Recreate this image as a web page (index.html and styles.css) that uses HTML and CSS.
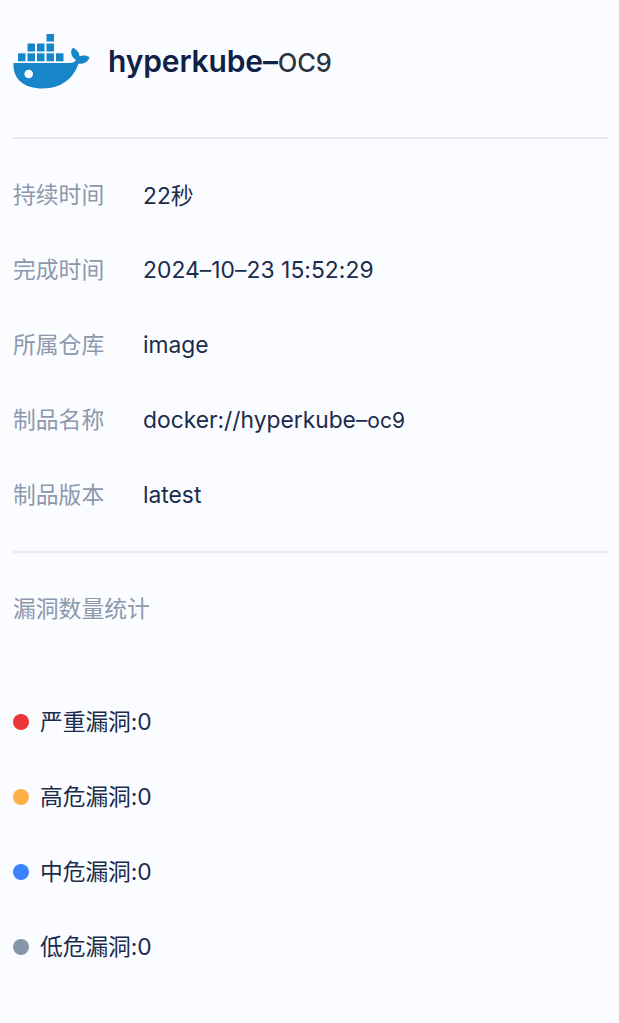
FILE: index.html
```
<!DOCTYPE html>
<html lang="zh-CN">

<head>
    <meta charset="UTF-8">
    <meta name="viewport" content="width=device-width, initial-scale=1.0">
    <title>hyperkube</title>
    <link rel="stylesheet" href="styles.css">
</head>

<body>
    <div class="panel">
        <div class="header">
            <svg class="logo" width="78" height="58" viewBox="0 0 78 58" fill="#1786c8">
                <rect x="33.5" y="1" width="7.5" height="7.5" />
                <rect x="14.5" y="10.5" width="7.5" height="8" />
                <rect x="24" y="10.5" width="7.5" height="8" />
                <rect x="33.5" y="10.5" width="7.5" height="8" />
                <rect x="5" y="20.3" width="7.5" height="8" />
                <rect x="14.5" y="20.3" width="7.5" height="8" />
                <rect x="24" y="20.3" width="7.5" height="8" />
                <rect x="33.5" y="20.3" width="7.5" height="8" />
                <rect x="43" y="20.3" width="7.5" height="8" />
                <path d="M.5 30H56C60 30 62 29 63 27C58.500 24 57 20 59 15.500L60.500 15C64.500 17 66.500 20 66.500 23.300C70 22 74 22.500 76.500 24.500C75 29 71 31 65.500 30.800C60 46 48 55.500 30 55.500C10 55.500-.5 45 .5 30Z" />
                <circle cx="15.700" cy="41" r="4.300" fill="#fafcff" />
            </svg>
            <h1 class="title">hyperkube–<span class="suffix">OC9</span></h1>
        </div>

        <div class="info">
            <div class="row"><span class="label">持续时间</span><span>22秒</span></div>
            <div class="row"><span class="label">完成时间</span><span class="date">2024–10–23 15:52:29</span></div>
            <div class="row"><span class="label">所属仓库</span><span>image</span></div>
            <div class="row"><span class="label">制品名称</span><span>docker://hyperkube–<span class="tag">oc9</span></span></div>
            <div class="row"><span class="label">制品版本</span><span>latest</span></div>
        </div>

        <div class="stats">
            <p class="stats-title">漏洞数量统计</p>
            <div class="level"><i class="dot critical"></i><span class="level-text">严重漏洞:0</span></div>
            <div class="level"><i class="dot high"></i><span class="level-text">高危漏洞:0</span></div>
            <div class="level"><i class="dot medium"></i><span class="level-text">中危漏洞:0</span></div>
            <div class="level"><i class="dot low"></i><span class="level-text">低危漏洞:0</span></div>
        </div>
    </div>
</body>

</html>
```
FILE: styles.css
```
* {
    box-sizing: border-box;
}

body {
    margin: 0;
    background-color: #fafcff;
    color: #1b2b4d;
    font-family: Inter, "Noto Sans CJK SC", sans-serif;
    font-size: 22.8px;
}

.panel {
    height: 1023px;
    padding: 0 11px 0 13px;
    overflow: hidden;
}

.header {
    display: flex;
    align-items: center;
    height: 137px;
    padding-bottom: 14px;
}

.logo {
    flex: none;
}

.title {
    margin: 0 0 0 17px;
    font-size: 30px;
    font-weight: 600;
    line-height: 40px;
    letter-spacing: -0.15px;
    color: #0f2147;
    white-space: nowrap;
}

.suffix {
    font-size: 25.5px;
    font-weight: 550;
    color: #2d3240;
}

.info {
    padding: 18px 0 19px;
    border-top: 2px solid #e8eaed;
    border-bottom: 2px solid #e8eaed;
}

.row {
    display: flex;
    align-items: center;
    height: 75px;
    white-space: nowrap;
}

.label {
    width: 130px;
    padding-bottom: 2px;
    color: #8c98ad;
}

.date {
    letter-spacing: 0.06px;
}

.tag {
    font-size: 21px;
}

.stats-title {
    margin: 0;
    padding-top: 18px;
    line-height: 75px;
    color: #8c98ad;
}

.level {
    display: flex;
    align-items: center;
    gap: 11px;
    height: 75px;
}

.level-text {
    padding-bottom: 3px;
    letter-spacing: -0.1px;
}

.stats-title + .level {
    margin-top: 38px;
}

.dot {
    width: 16px;
    height: 16px;
    border-radius: 50%;
}

.critical {
    background-color: #eb3538;
}

.high {
    background-color: #ffb149;
}

.medium {
    background-color: #3b82ff;
}

.low {
    background-color: #8796a8;
}
```
